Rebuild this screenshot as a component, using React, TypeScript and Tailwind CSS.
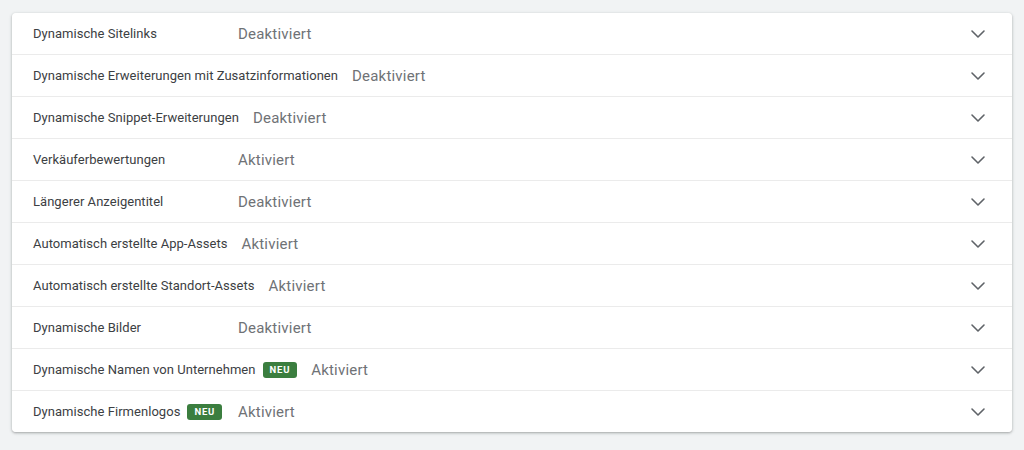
import { ChevronDown } from "lucide-react";

type Row = { label: string; status: string; neu?: boolean };

const rows: Row[] = [
  { label: "Dynamische Sitelinks", status: "Deaktiviert" },
  { label: "Dynamische Erweiterungen mit Zusatzinformationen", status: "Deaktiviert" },
  { label: "Dynamische Snippet-Erweiterungen", status: "Deaktiviert" },
  { label: "Verkäuferbewertungen", status: "Aktiviert" },
  { label: "Längerer Anzeigentitel", status: "Deaktiviert" },
  { label: "Automatisch erstellte App-Assets", status: "Aktiviert" },
  { label: "Automatisch erstellte Standort-Assets", status: "Aktiviert" },
  { label: "Dynamische Bilder", status: "Deaktiviert" },
  { label: "Dynamische Namen von Unternehmen", status: "Aktiviert", neu: true },
  { label: "Dynamische Firmenlogos", status: "Aktiviert", neu: true },
];

export default function App() {
  return (
    <div className="min-h-[450px] w-[1024px] bg-[#f1f3f4] px-3 pt-[13px] font-['Roboto',sans-serif]">
      <div className="flex flex-col gap-px bg-[#ebebeb] rounded-[4px] shadow-[0_1px_2px_rgba(60,64,67,0.3),0_1px_3px_1px_rgba(60,64,67,0.12)] overflow-hidden">
        {rows.map((r) => (
          <div key={r.label} className="flex h-[41px] items-center bg-white pl-[21px] pr-[22px] pt-px">
            <div className="flex min-w-[191px] items-center gap-[7px]">
              <span className="text-[13px] tracking-[0.04px] text-[#3c4043]">{r.label}</span>
              {r.neu && (
                <span className="rounded-[3px] bg-[#3b7e3f] px-[7px] py-px text-[9.5px] font-bold leading-[14px] tracking-[0.8px] text-white">
                  NEU
                </span>
              )}
            </div>
            <span className="ml-[14px] text-[15px] tracking-[0.2px] text-[#6f7276]">{r.status}</span>
            <ChevronDown className="ml-auto h-6 w-6 text-[#5f6368]" strokeWidth={1.6} />
          </div>
        ))}
      </div>
    </div>
  );
}
